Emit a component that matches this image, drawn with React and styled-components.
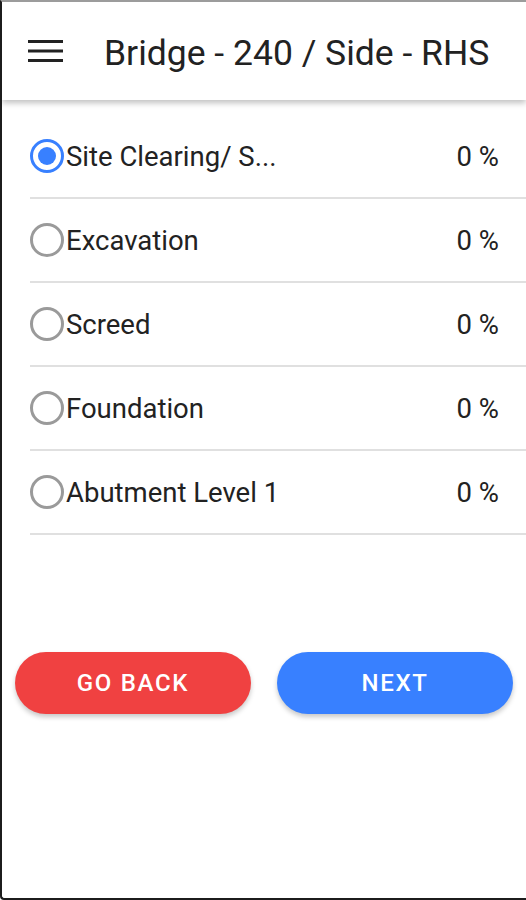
import React from "react";
import styled, { createGlobalStyle } from "styled-components";

const GlobalStyle = createGlobalStyle`
  html, body {
    margin: 0;
    padding: 0;
    background: #ffffff;
  }
  body {
    font-family: Roboto, "Noto Sans", Arial, sans-serif;
    color: #222222;
  }
`;

const Frame = styled.div`
  box-sizing: border-box;
  height: 900px;
  width: 526px;
  display: flex;
  flex-direction: column;
  background: #ffffff;
  border-top: 2px solid #9c9c9c;
  border-left: 2px solid #1c1c1c;
  border-bottom: 2px solid #1c1c1c;
  border-bottom-left-radius: 4px;
  overflow: hidden;
`;

const Toolbar = styled.header`
  height: 98px;
  flex-shrink: 0;
  display: flex;
  align-items: center;
  gap: 41px;
  padding-left: 26px;
  padding-top: 3px;
  box-sizing: border-box;
  background: #ffffff;
  box-shadow: 0 3px 6px rgba(0, 0, 0, 0.25);
  position: relative;
  z-index: 1;
`;

const MenuIcon = styled.svg`
  width: 35px;
  height: 24px;
  flex-shrink: 0;
  margin-top: -3px;
`;

const Title = styled.h1`
  margin: 0;
  font-size: 35.5px;
  font-weight: 400;
  color: #222222;
  white-space: nowrap;
`;

const List = styled.div`
  margin-top: 15px;
  display: flex;
  flex-direction: column;
`;

const Row = styled.label`
  height: 84px;
  box-sizing: border-box;
  margin-left: 28px;
  padding-right: 27px;
  display: flex;
  align-items: center;
  border-bottom: 2px solid #e0e0e0;
  cursor: pointer;
`;

const Radio = styled.span`
  width: 34px;
  height: 34px;
  box-sizing: border-box;
  border-radius: 50%;
  border: 3px solid ${(p) => (p.checked ? "#3880ff" : "#9a9a9a")};
  display: flex;
  align-items: center;
  justify-content: center;
  flex-shrink: 0;

  &::after {
    content: "";
    width: 18px;
    height: 18px;
    border-radius: 50%;
    background: ${(p) => (p.checked ? "#3880ff" : "transparent")};
  }
`;

const Label = styled.span`
  flex: 1;
  margin-left: 2px;
  font-size: 27.5px;
  color: #222222;
  white-space: nowrap;
`;

const Percent = styled.span`
  font-size: 27.5px;
  color: #222222;
`;

const Actions = styled.div`
  margin-top: 117px;
  padding: 0 13px;
  display: flex;
  gap: 26px;
`;

const Button = styled.button`
  flex: 1;
  height: 62px;
  border: none;
  border-radius: 31px;
  background: ${(p) => (p.danger ? "#f04141" : "#3880ff")};
  color: #ffffff;
  font-family: Roboto, "Noto Sans", Arial, sans-serif;
  font-size: 24px;
  font-weight: 500;
  letter-spacing: 1.7px;
  text-transform: uppercase;
  box-shadow: 0 3px 5px rgba(0, 0, 0, 0.22);
  cursor: pointer;
`;

const stages = [
  { name: "Site Clearing/ S...", value: 0 },
  { name: "Excavation", value: 0 },
  { name: "Screed", value: 0 },
  { name: "Foundation", value: 0 },
  { name: "Abutment Level 1", value: 0 },
];

export default function App() {
  const [selected, setSelected] = React.useState(0);

  return (
    <>
      <GlobalStyle />
      <Frame>
        <Toolbar>
          <MenuIcon viewBox="0 0 35 24">
            <rect x="0" y="1" width="35" height="3" fill="#222" />
            <rect x="0" y="10.5" width="35" height="3" fill="#222" />
            <rect x="0" y="20" width="35" height="3" fill="#222" />
          </MenuIcon>
          <Title>Bridge - 240 / Side - RHS</Title>
        </Toolbar>
        <List>
          {stages.map((s, i) => (
            <Row key={s.name} onClick={() => setSelected(i)}>
              <Radio checked={selected === i} />
              <Label>{s.name}</Label>
              <Percent>{s.value} %</Percent>
            </Row>
          ))}
        </List>
        <Actions>
          <Button danger>Go Back</Button>
          <Button>Next</Button>
        </Actions>
      </Frame>
    </>
  );
}
